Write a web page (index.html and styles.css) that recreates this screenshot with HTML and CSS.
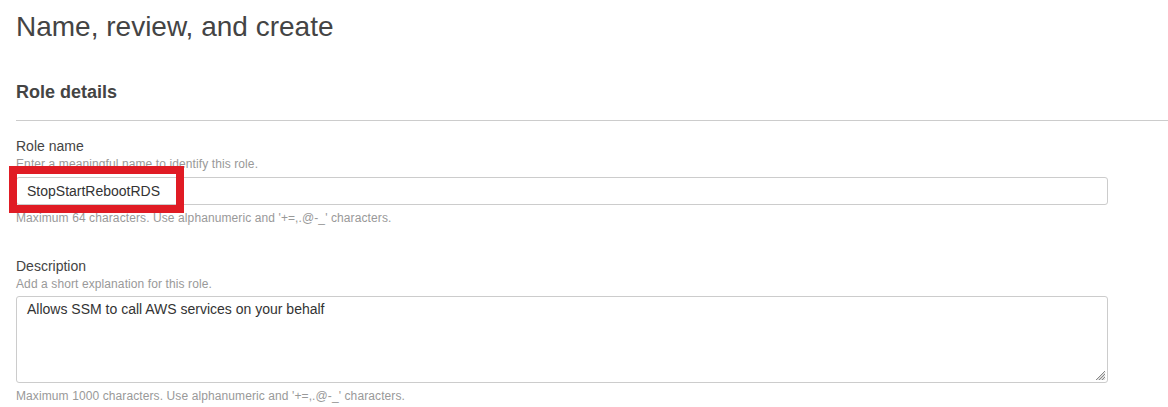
FILE: index.html
```html
<!DOCTYPE html>
<html>
<head>
<meta charset="utf-8">
<link rel="stylesheet" href="styles.css">
</head>
<body>
<div class="page">
  <h1 class="title">Name, review, and create</h1>
  <h2 class="section-title">Role details</h2>
  <div class="rule"></div>
  <div class="field">
    <div class="label">Role name</div>
    <div class="hint">Enter a meaningful name to identify this role.</div>
    <div class="input-wrap">
      <div class="input">StopStartRebootRDS</div>
      <div class="highlight"></div>
    </div>
    <div class="constraint">Maximum 64 characters. Use alphanumeric and '+=,.@-_' characters.</div>
  </div>
  <div class="field field-desc">
    <div class="label">Description</div>
    <div class="hint">Add a short explanation for this role.</div>
    <div class="textarea">Allows SSM to call AWS services on your behalf
      <svg class="grip" width="12" height="12" viewBox="0 0 12 12">
        <path d="M11 2 L2 11 M11 5 L5 11 M11 8 L8 11" stroke="#888" stroke-width="1"/>
        <path d="M11 3.5 L3.5 11 M11 6.5 L6.5 11 M11 9.5 L9.5 11" stroke="#bbb" stroke-width="1"/>
      </svg>
    </div>
    <div class="constraint">Maximum 1000 characters. Use alphanumeric and '+=,.@-_' characters.</div>
  </div>
</div>
</body>
</html>
```

FILE: styles.css
```css
html, body {
  margin: 0;
  padding: 0;
  background: #fff;
}
body {
  font-family: "Liberation Sans", Arial, sans-serif;
  color: #444;
}
.page {
  padding: 9px 0 0 16px;
}
.title {
  margin: 0;
  font-size: 28px;
  font-weight: normal;
  line-height: 36px;
  color: #444;
}
.section-title {
  margin: 36px 0 0 0;
  font-size: 18px;
  font-weight: bold;
  line-height: 22px;
  color: #444;
}
.rule {
  margin-top: 17px;
  height: 1px;
  background: #ccc;
}
.field {
  margin-top: 17px;
  margin-right: 60px;
}
.field-desc {
  margin-top: 32px;
}
.label {
  font-size: 14px;
  line-height: 17px;
  color: #444;
}
.hint {
  font-size: 12px;
  line-height: 15px;
  color: #999;
  letter-spacing: 0.1px;
  margin-top: 2px;
}
.input-wrap {
  position: relative;
  margin-top: 5px;
}
.input {
  height: 26px;
  border: 1px solid #ccc;
  border-radius: 3px;
  padding: 0 10px;
  font-size: 14px;
  line-height: 26px;
  color: #333;
}
.highlight {
  position: absolute;
  left: -7px;
  top: -11px;
  width: 159px;
  height: 31px;
  border: 8px solid #e01b24;
  pointer-events: none;
}
.constraint {
  font-size: 12px;
  line-height: 15px;
  color: #999;
  letter-spacing: 0.1px;
  margin-top: 6px;
}
.textarea {
  position: relative;
  margin-top: 4px;
  height: 77px;
  border: 1px solid #ccc;
  border-radius: 3px;
  padding: 4px 10px;
  font-size: 14px;
  line-height: 16px;
  color: #333;
}
.grip {
  position: absolute;
  right: 1px;
  bottom: 1px;
}
```
